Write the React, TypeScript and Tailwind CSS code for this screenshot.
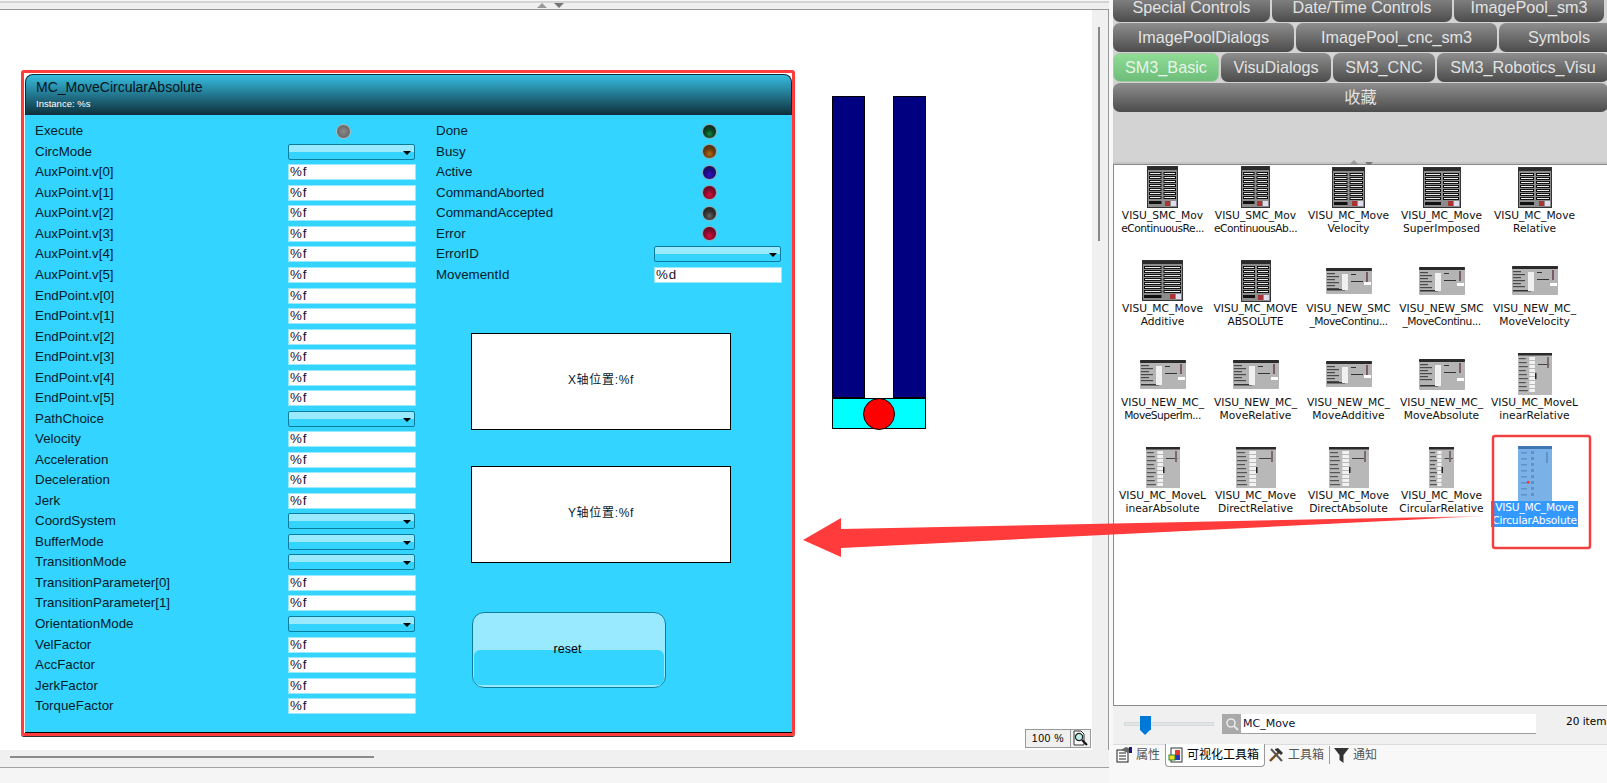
import React from 'react';

const leftRows: [string, string][] = [
  ['Execute', 'led'], ['CircMode', 'combo'], ['AuxPoint.v[0]', 'input'], ['AuxPoint.v[1]', 'input'],
  ['AuxPoint.v[2]', 'input'], ['AuxPoint.v[3]', 'input'], ['AuxPoint.v[4]', 'input'], ['AuxPoint.v[5]', 'input'],
  ['EndPoint.v[0]', 'input'], ['EndPoint.v[1]', 'input'], ['EndPoint.v[2]', 'input'], ['EndPoint.v[3]', 'input'],
  ['EndPoint.v[4]', 'input'], ['EndPoint.v[5]', 'input'], ['PathChoice', 'combo'], ['Velocity', 'input'],
  ['Acceleration', 'input'], ['Deceleration', 'input'], ['Jerk', 'input'], ['CoordSystem', 'combo'],
  ['BufferMode', 'combo'], ['TransitionMode', 'combo'], ['TransitionParameter[0]', 'input'],
  ['TransitionParameter[1]', 'input'], ['OrientationMode', 'combo'], ['VelFactor', 'input'],
  ['AccFactor', 'input'], ['JerkFactor', 'input'], ['TorqueFactor', 'input'],
];

const leds = [
  { label: 'Done', color: 'bg-[radial-gradient(circle_at_50%_68%,#0f8a3c_0,#0b4a26_35%,#082a22_80%)]' },
  { label: 'Busy', color: 'bg-[radial-gradient(circle_at_50%_68%,#b86a10_0,#6e3f10_40%,#4a2c10_85%)]' },
  { label: 'Active', color: 'bg-[radial-gradient(circle_at_50%_68%,#3010c8_0,#1e0e80_40%,#14104e_85%)]' },
  { label: 'CommandAborted', color: 'bg-[radial-gradient(circle_at_50%_68%,#d80c3c_0,#8a0a2c_40%,#5c0a22_85%)]' },
  { label: 'CommandAccepted', color: 'bg-[radial-gradient(circle_at_50%_68%,#666666_0,#333333_40%,#222222_85%)]' },
  { label: 'Error', color: 'bg-[radial-gradient(circle_at_50%_68%,#d80c3c_0,#8a0a2c_40%,#5c0a22_85%)]' },
];

type Kind = 'form' | 'wide' | 'tall' | 'sel';

const items: { l1: string; l2: string; kind: Kind; w: number; h: number }[] = [
  { l1: 'VISU_SMC_Mov', l2: 'eContinuousRe...', kind: 'form', w: 31, h: 42 },
  { l1: 'VISU_SMC_Mov', l2: 'eContinuousAb...', kind: 'form', w: 29, h: 42 },
  { l1: 'VISU_MC_Move', l2: 'Velocity', kind: 'form', w: 33, h: 41 },
  { l1: 'VISU_MC_Move', l2: 'SuperImposed', kind: 'form', w: 38, h: 41 },
  { l1: 'VISU_MC_Move', l2: 'Relative', kind: 'form', w: 34, h: 41 },
  { l1: 'VISU_MC_Move', l2: 'Additive', kind: 'form', w: 41, h: 41 },
  { l1: 'VISU_MC_MOVE', l2: 'ABSOLUTE', kind: 'form', w: 30, h: 42 },
  { l1: 'VISU_NEW_SMC', l2: '_MoveContinu...', kind: 'wide', w: 46, h: 26 },
  { l1: 'VISU_NEW_SMC', l2: '_MoveContinu...', kind: 'wide', w: 46, h: 28 },
  { l1: 'VISU_NEW_MC_', l2: 'MoveVelocity', kind: 'wide', w: 46, h: 29 },
  { l1: 'VISU_NEW_MC_', l2: 'MoveSuperIm...', kind: 'wide', w: 46, h: 29 },
  { l1: 'VISU_NEW_MC_', l2: 'MoveRelative', kind: 'wide', w: 46, h: 29 },
  { l1: 'VISU_NEW_MC_', l2: 'MoveAdditive', kind: 'wide', w: 46, h: 26 },
  { l1: 'VISU_NEW_MC_', l2: 'MoveAbsolute', kind: 'wide', w: 46, h: 31 },
  { l1: 'VISU_MC_MoveL', l2: 'inearRelative', kind: 'tall', w: 34, h: 42 },
  { l1: 'VISU_MC_MoveL', l2: 'inearAbsolute', kind: 'tall', w: 34, h: 41 },
  { l1: 'VISU_MC_Move', l2: 'DirectRelative', kind: 'tall', w: 40, h: 41 },
  { l1: 'VISU_MC_Move', l2: 'DirectAbsolute', kind: 'tall', w: 40, h: 41 },
  { l1: 'VISU_MC_Move', l2: 'CircularRelative', kind: 'tall', w: 25, h: 41 },
  { l1: 'VISU_MC_Move', l2: 'CircularAbsolute', kind: 'sel', w: 34, h: 55 },
];

const Thumb = ({ kind, w, h }: { kind: Kind; w: number; h: number }) => {
  if (kind === 'form') {
    const rows = [6, 10, 14, 18, 22, 26, 30];
    return (
      <svg width={w} height={h} viewBox={`0 0 ${w} ${h}`} className="block">
        <rect x="0.5" y="0.5" width={w - 1} height={h - 1} fill="#8c8c8c" stroke="#333" />
        <rect x="1" y="1" width={w - 2} height="3" fill="#2a2a2a" />
        {rows.map((y) => (
          <g key={y}>
            <rect x="2" y={y} width={w / 2 - 3} height="3" fill="#111" />
            <rect x="3" y={y + 1} width={w / 2 - 5} height="1" fill="#eee" />
            <rect x={w / 2 + 1} y={y} width={w / 2 - 3} height="3" fill="#111" />
            <rect x={w / 2 + 2} y={y + 1} width={w / 2 - 5} height="1" fill="#eee" />
          </g>
        ))}
        <rect x="2" y="35" width={w / 2 - 3} height="3" fill="#111" />
        <rect x={w - 13} y={h - 7} width="5" height="5" fill="#a33" />
        <rect x={w - 7} y={h - 7} width="5" height="5" fill="#dde" />
      </svg>
    );
  }
  if (kind === 'wide') {
    return (
      <svg width={w} height={h} viewBox={`0 0 ${w} ${h}`} className="block">
        <rect width={w} height={h} rx="1" fill="#b4b4b4" />
        <rect width={w} height="3" rx="1" fill="#2a2a2a" />
        {[5, 8, 11, 14, 17, 20].map((y, i) => (
          <rect key={y} x="1" y={y} width={i % 2 ? 12 : 8} height="1.2" fill="#4a4a4a" />
        ))}
        <rect x="1" y={h - 5} width="18" height="1.5" fill="#333" />
        <rect x="16" y="6" width="6" height={h - 10} fill="#f0f0f0" />
        <rect x="25" y="6" width="5" height="1" fill="#333" />
        <rect x="25" y="13" width="12" height="1" fill="#333" />
        <rect x="40" y="4" width="2" height="10" fill="#7a5a6a" />
        <rect x="38" y={h - 12} width="7" height="3" fill="#fff" />
      </svg>
    );
  }
  if (kind === 'tall') {
    return (
      <svg width={w} height={h} viewBox={`0 0 ${w} ${h}`} className="block">
        <rect width={w} height={h} fill="#b8b8b8" />
        <rect width={w} height="2.5" fill="#2a2a2a" />
        {[5, 9, 13, 17, 21, 25, 29, 33, 37].map((y, i) => (
          <g key={y}>
            <rect x="1" y={y} width={w / 5 + (i % 3)} height="1.2" fill="#555" />
            <rect x={w / 3} y={y - 1} width={w / 6} height="3" fill="#f2f2f2" />
          </g>
        ))}
        <rect x={w / 2 + 3} y="11" width={w / 3} height="1" fill="#444" />
        <rect x={w - 5} y="4" width="2" height="11" fill="#7a6a6a" />
        <rect x={w / 2} y="20" width="1.5" height="6" fill="#222" />
      </svg>
    );
  }
  return (
    <svg width={w} height={h} viewBox={`0 0 ${w} ${h}`} className="block">
      <rect width={w} height={h} fill="#7ab1e6" />
      <rect width={w} height="3" fill="#3f77b3" />
      {[6, 12, 18, 24, 30, 36, 42, 48].map((y) => (
        <g key={y}>
          <rect x="3" y={y} width="6" height="1.5" fill="#5f92c8" />
          <rect x="13" y={y - 1} width="3" height="3" fill="#5f92c8" />
        </g>
      ))}
      <rect x="9" y="35" width="2.5" height="2.5" fill="#ff3030" />
      <rect x="28" y="6" width="2" height="11" fill="#5f92c8" />
    </svg>
  );
};

const Combo = () => (
  <div className="relative w-[127px] h-[16px] border border-[#0b7c9c] rounded-[2px] bg-[linear-gradient(#99e9ff_0,#99e9ff_50%,#33d4ff_50%)]">
    <div className="absolute right-[3px] top-[6px] w-0 h-0 border-x-[4px] border-x-transparent border-t-[4px] border-t-black" />
  </div>
);

const Field = ({ text }: { text: string }) => (
  <div className="ml-[1px] w-[126px] h-[14px] bg-white outline outline-1 outline-[#99e9ff] pl-[1px] text-[13.33px] leading-[14px] tracking-[0.8px] text-[#1a1030]">
    {text}
  </div>
);

const Tab = ({ label, w, active }: { label: string; w: string; active?: boolean }) => (
  <div
    className={`${w} shrink-0 h-[29px] rounded-[7px] flex items-center justify-center text-[16.2px] ${
      active
        ? 'bg-[linear-gradient(#8fdc95,#6dbd79)] border border-[#a8c8a8] text-[#e8f5e8]'
        : 'bg-[linear-gradient(#8e8e8e,#4c4c4c)] text-[#e2e2e2]'
    }`}
  >
    {label}
  </div>
);

export default function App() {
  return (
    <div className="relative w-[1607px] h-[783px] overflow-hidden bg-[#f5f5f5] font-['Liberation_Sans','Noto_Sans_CJK_SC',sans-serif] text-black">
      <div className="flex h-full">
        {/* editor side */}
        <div className="w-[1109px] shrink-0 flex flex-col">
          <div className="relative h-[9px] bg-[#efefef] border-t-[2px] border-t-[#d4d4d4] border-b border-b-[#999] mt-[1px] shrink-0">
            <div className="absolute left-[537px] top-0 w-0 h-0 border-x-[5px] border-x-transparent border-b-[5px] border-b-[#999]" />
            <div className="absolute left-[554px] top-0 w-0 h-0 border-x-[5px] border-x-transparent border-t-[5px] border-t-[#777]" />
          </div>
          <div className="flex h-[740px] shrink-0">
            <div className="relative w-[1092px] bg-white flex items-start pl-[25px] pt-[64px]">
              {/* visu panel */}
              <div className="relative w-[767px] h-[661px] flex flex-col shrink-0">
                <div className="h-[41px] shrink-0 rounded-t-[8px] border-t border-x border-[#0c2a34] bg-[linear-gradient(#37bde0,#0e2f3b)] pl-[10px] pt-[3px]">
                  <div className="text-[14px] leading-[18px] text-[#04141c]">MC_MoveCircularAbsolute</div>
                  <div className="text-[9.5px] leading-[12px] mt-[2px] text-white">Instance: %s</div>
                </div>
                <div className="flex-1 flex bg-[#33d4ff] border-b-[3px] border-b-black pt-[6px] text-[13.33px] text-[#06202c]">
                  <div className="w-[411px] shrink-0 pl-[10px]">
                    {leftRows.map(([label, kind]) => (
                      <div key={label} className="flex items-center h-[20.54px]">
                        <span className="w-[253px] shrink-0">{label}</span>
                        {kind === 'led' && (
                          <div className="ml-[48px] w-[15px] h-[15px] rounded-full border border-[#b8b8b8] bg-[radial-gradient(circle_at_50%_50%,#8a8a8a,#666_75%)]" />
                        )}
                        {kind === 'combo' && <Combo />}
                        {kind === 'input' && <Field text="%f" />}
                      </div>
                    ))}
                  </div>
                  <div className="flex-1">
                    {leds.map((led) => (
                      <div key={led.label} className="flex items-center h-[20.54px]">
                        <span className="w-[266px] shrink-0">{led.label}</span>
                        <div className={`w-[15px] h-[15px] rounded-full border border-[#9aa4a8] ${led.color}`} />
                      </div>
                    ))}
                    <div className="flex items-center h-[20.54px]">
                      <span className="w-[218px] shrink-0">ErrorID</span>
                      <Combo />
                    </div>
                    <div className="flex items-center h-[20.54px]">
                      <span className="w-[218px] shrink-0">MovementId</span>
                      <Field text="%d" />
                    </div>
                    <div className="ml-[35px] mt-[48px] w-[260px] h-[97px] pb-[4px] bg-white border border-black flex items-center justify-center text-[12px] tracking-[0.7px]">
                      X轴位置:%f
                    </div>
                    <div className="ml-[35px] mt-[36px] w-[260px] h-[97px] pb-[4px] bg-white border border-black flex items-center justify-center text-[12px] tracking-[0.7px]">
                      Y轴位置:%f
                    </div>
                    <div className="relative ml-[36px] mt-[49px] w-[194px] h-[76px] rounded-[12px] border border-[#0d7f9e] bg-[#99e9ff] overflow-hidden">
                      <div className="absolute left-[1px] right-[1px] top-[37px] bottom-[1px] rounded-[6px] bg-[#33d4ff] border-b border-b-[#99e9ff]" />
                      <div className="absolute inset-0 flex items-center justify-center pb-[2px] pr-[3px] text-[12.5px] text-black">reset</div>
                    </div>
                  </div>
                </div>
                <div className="absolute -left-[4px] -top-[4px] -right-[3px] -bottom-[1px] border-[3px] border-[#ff3c3c] rounded-[3px] shadow-[0_1px_0_#333]" />
              </div>

              {/* cylinder figure */}
              <div className="relative ml-[40px] mt-[22px] w-[94px] shrink-0 flex flex-col">
                <div className="flex justify-between h-[302px]">
                  <div className="w-[33px] bg-[#000080] border border-black" />
                  <div className="w-[33px] bg-[#000080] border border-black" />
                </div>
                <div className="h-[31px] bg-[#00ffff] border border-black" />
                <div className="absolute left-[31px] top-[302px] w-[32px] h-[32px] rounded-full bg-[#ff0000] border border-black" />
              </div>

              {/* zoom widget */}
              <div className="absolute right-[1px] bottom-[2px] flex h-[19px] bg-[#f0f0f0] border border-[#999]">
                <div className="w-[45px] flex items-center justify-center text-[10.5px] tracking-[0.5px] border-r border-[#999]">100 %</div>
                <div className="w-[19px] flex items-center justify-center">
                  <svg width="17" height="17" viewBox="0 0 17 17">
                    <path d="M2 1h7l3 3v11H2z" fill="#fff" stroke="#333" />
                    <circle cx="7" cy="7" r="3.6" fill="#bdeee8" stroke="#222" strokeWidth="1.2" />
                    <path d="M10 10l5 5" stroke="#111" strokeWidth="2" />
                  </svg>
                </div>
              </div>
            </div>
            <div className="relative w-[16px] bg-[#f0f0f0] border-r border-r-[#999] box-content">
              <div className="absolute left-[6px] top-[17px] w-[2px] h-[214px] bg-[#888]" />
            </div>
          </div>
          <div className="relative h-[18px] shrink-0 bg-[#f0f0f0] border-b border-b-[#a0a0a0]">
            <div className="absolute left-[10px] top-[6px] w-[364px] h-[2px] bg-[#8c8c8c]" />
          </div>
        </div>

        {/* toolbox side */}
        <div className="flex-1 min-w-0 flex flex-col pl-[4px] bg-[#f8f8f8]">
          <div className="-mt-[7px] flex flex-col gap-[1px] bg-[#d3d3d3] overflow-hidden shrink-0">
            <div className="flex gap-[2px]">
              <Tab label="Special Controls" w="w-[157px]" />
              <Tab label="Date/Time Controls" w="w-[180px]" />
              <Tab label="ImagePool_sm3" w="w-[150px]" />
            </div>
            <div className="flex gap-[2px]">
              <Tab label="ImagePoolDialogs" w="w-[181px]" />
              <Tab label="ImagePool_cnc_sm3" w="w-[201px]" />
              <Tab label="Symbols" w="w-[120px]" />
            </div>
            <div className="flex gap-[2px]">
              <Tab label="SM3_Basic" w="w-[106px]" active />
              <Tab label="VisuDialogs" w="w-[110px]" />
              <Tab label="SM3_CNC" w="w-[102px]" />
              <Tab label="SM3_Robotics_Visu" w="w-[172px]" />
            </div>
            <Tab label="收藏" w="w-[495px]" />
          </div>
          <div className="h-[50px] shrink-0 bg-[#d3d3d3]" />
          <div className="relative h-[3px] shrink-0 bg-[#c4c4c4] border-b border-b-[#8a8a8a]">
            <div className="absolute left-[237px] -top-[2px] w-0 h-0 border-x-[4px] border-x-transparent border-b-[4px] border-b-[#999]" />
            <div className="absolute left-[252px] top-0 w-0 h-0 border-x-[4px] border-x-transparent border-t-[4px] border-t-[#777]" />
          </div>
          <div className="relative h-[541px] shrink-0 bg-white border-l border-b border-[#8a8a8a] pl-[2px] pt-[0.5px]">
            <div className="grid grid-cols-[repeat(5,93px)] auto-rows-[93.5px]">
              {items.map((it, i) => (
                <div key={i} className="relative flex flex-col items-center text-[10.7px] leading-[13px] text-[#111] font-['DejaVu_Sans',sans-serif]">
                  <div className="h-[43px] flex items-center justify-center shrink-0">
                    {it.kind === 'sel' ? (
                      <div className="absolute top-0">
                        <Thumb kind={it.kind} w={it.w} h={it.h} />
                      </div>
                    ) : (
                      <Thumb kind={it.kind} w={it.w} h={it.h} />
                    )}
                  </div>
                  {it.kind === 'sel' ? (
                    <div className="relative mt-[12px] bg-[#3399ff] text-white text-center px-[1px] whitespace-nowrap tracking-[-0.2px]">
                      <div>{it.l1}</div>
                      <div>{it.l2}</div>
                    </div>
                  ) : (
                    <div className="text-center whitespace-nowrap">
                      <div>{it.l1}</div>
                      <div className={it.l2.endsWith('...') ? 'tracking-[-0.5px]' : ''}>{it.l2}</div>
                    </div>
                  )}
                </div>
              ))}
            </div>
          </div>
          <div className="h-[38px] shrink-0 bg-[#f0f0f0] flex items-center pl-[11px] text-[11.5px] overflow-hidden">
            <div className="relative shrink-0 w-[90px] h-[4px] bg-[#e2e6e6] border border-[#d6dada] -mt-[2px]">
              <div className="absolute left-[15px] -top-[7px] w-[11px] h-[14px] bg-[#0078d7]" />
              <div className="absolute left-[15px] top-[7px] w-0 h-0 border-x-[5.5px] border-x-transparent border-t-[5px] border-t-[#0078d7]" />
            </div>
            <div className="shrink-0 ml-[8px] w-[19px] h-[20px] bg-[#a9a9a9] flex items-center justify-center -mt-[2px]">
              <svg width="14" height="14" viewBox="0 0 14 14" fill="none">
                <circle cx="6" cy="6" r="4" stroke="#e8e8e8" strokeWidth="1.6" />
                <path d="M9 9l4 4" stroke="#e8e8e8" strokeWidth="1.8" />
              </svg>
            </div>
            <div className="w-[295px] shrink-0 h-[20px] bg-white border-b border-b-[#a0a0a0] pl-[2px] leading-[20px] -mt-[2px] text-[#101030] text-[11px] font-['DejaVu_Sans',sans-serif]">
              MC_Move
            </div>
            <div className="shrink-0 ml-[30px] -mt-[6px] whitespace-nowrap text-[10.5px] font-['DejaVu_Sans',sans-serif]">20 items</div>
          </div>
          <div className="h-[24px] shrink-0 flex items-start text-[12px] leading-[20px] text-[#555] bg-[#f8f8f8] border-t border-t-[#dcdcdc]">
            <div className="flex items-center gap-[4px] pl-[3px] pr-[5px] h-[20px]">
              <svg width="16" height="16" viewBox="0 0 16 16">
                <rect x="1" y="3" width="11" height="12" fill="#fff" stroke="#222" />
                <path d="M3 6h7M3 9h7M3 12h7" stroke="#222" />
                <path d="M5 3l5-3 5 2-3 4z" fill="#666" />
                <rect x="13" y="0" width="3" height="6" fill="#1a1a70" />
              </svg>
              <span>属性</span>
            </div>
            <div className="flex items-center gap-[3px] pl-[2px] pr-[5px] h-[23px] -mt-[1px] bg-white border border-t-0 border-[#999] rounded-b-[4px] text-black">
              <svg width="16" height="16" viewBox="0 0 16 16">
                <rect x="3" y="1" width="11" height="14" fill="#fff" stroke="#333" />
                <rect x="7" y="3" width="5" height="5" fill="#e8382e" />
                <rect x="7" y="8" width="5" height="5" fill="#2a3bb8" />
                <rect x="1" y="8" width="6" height="5" fill="#f0e020" stroke="#2a8a2a" />
              </svg>
              <span>可视化工具箱</span>
            </div>
            <div className="flex items-center gap-[4px] pl-[3px] pr-[5px] h-[20px]">
              <svg width="16" height="16" viewBox="0 0 16 16">
                <path d="M2 14L11 5" stroke="#7a4a1a" strokeWidth="2.4" />
                <path d="M7 2l3-1 5 5-2 2-6-5z" fill="#333" />
                <path d="M3 2l11 12" stroke="#555" strokeWidth="2" />
              </svg>
              <span>工具箱</span>
            </div>
            <div className="w-px h-[18px] mt-[1px] bg-[#999]" />
            <div className="flex items-center gap-[4px] pl-[4px] h-[20px]">
              <svg width="15" height="16" viewBox="0 0 15 16">
                <path d="M0 1h15l-5.5 7v8l-4-3V8z" fill="#333" />
              </svg>
              <span>通知</span>
            </div>
          </div>
        </div>
      </div>

      {/* annotations */}
      <svg className="absolute left-0 top-0 pointer-events-none" width="1607" height="783" viewBox="0 0 1607 783" fill="none">
        <defs>
          <linearGradient id="shaft" x1="840" y1="0" x2="1487" y2="0" gradientUnits="userSpaceOnUse">
            <stop offset="0.9" stopColor="#ff3b3b" />
            <stop offset="1" stopColor="#ff3b3b" stopOpacity="0.2" />
          </linearGradient>
        </defs>
        <polygon points="803,540 841,518 841,529 1487,516 841,548 841,557" fill="url(#shaft)" />
        <rect x="1493" y="436" width="97" height="112" rx="2" stroke="#f04040" strokeWidth="2.5" />
      </svg>
    </div>
  );
}
